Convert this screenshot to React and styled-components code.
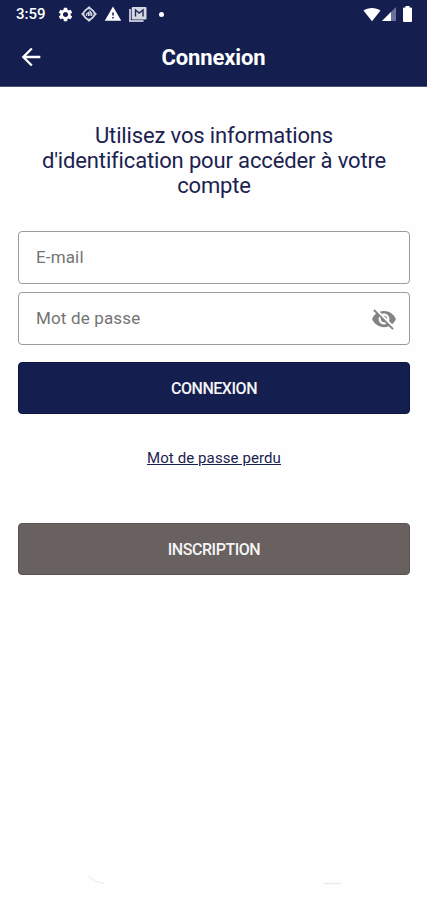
// IMPORT PACKAGES
import styled, { createGlobalStyle } from 'styled-components';
import { MdArrowBack, MdSettings, MdVisibilityOff, MdWarning } from 'react-icons/md';

// STYLES
const GlobalStyle = createGlobalStyle`
  *, *::before, *::after {
    box-sizing: border-box;
  }
  body {
    margin: 0;
    background-color: #fefefe;
    font-family: Roboto, sans-serif;
  }
`;

const Screen = styled.div`
  width: 427px;
  height: 900px;
  display: flex;
  flex-direction: column;
  overflow: hidden;
`;

const Header = styled.header`
  flex: none;
  height: 87px;
  background-color: #141f50;
  color: #fff;
  border-bottom: 1px solid #4c5477;
`;

const StatusBar = styled.div`
  height: 28px;
  padding: 0 15px 0 16px;
  display: flex;
  align-items: center;
  justify-content: space-between;
`;

const StatusGroup = styled.div`
  display: flex;
  align-items: center;
  gap: ${(props) => props.$gap};
  svg {
    display: block;
  }
`;

const Clock = styled.span`
  width: 34px;
  font-size: 15px;
  font-weight: 500;
  line-height: 18px;
`;

const Dot = styled.span`
  width: 5px;
  height: 5px;
  margin-left: 5px;
  border-radius: 50%;
  background-color: #fff;
`;

const Toolbar = styled.div`
  height: 58px;
  padding: 0 17px;
  display: grid;
  grid-template-columns: 28px 1fr 28px;
  align-items: center;
`;

const IconButton = styled.button`
  padding: 0;
  border: none;
  background: none;
  color: ${(props) => props.$color};
  cursor: pointer;
  svg {
    display: block;
  }
`;

const Title = styled.h1`
  margin: 0;
  padding-top: 2px;
  font-size: 22px;
  font-weight: 700;
  line-height: 26px;
  letter-spacing: -0.1px;
  text-align: center;
`;

const Main = styled.main`
  flex: 1;
  padding: 36px 17px 0 18px;
  display: flex;
  flex-direction: column;
`;

const Intro = styled.p`
  margin: 0 0 33px;
  font-size: 22px;
  line-height: 25px;
  letter-spacing: -0.15px;
  text-align: center;
  color: #1b2250;
`;

const Form = styled.form`
  display: flex;
  flex-direction: column;
`;

const Field = styled.label`
  height: 53px;
  margin-bottom: 8px;
  padding: 0 12px 0 17px;
  display: flex;
  align-items: center;
  border: 1px solid #9b9b9b;
  border-radius: 4px;
`;

const Input = styled.input`
  flex: 1;
  min-width: 0;
  padding: 0 0 2px;
  border: none;
  outline: none;
  background: none;
  font-family: inherit;
  font-size: 17px;
  letter-spacing: 0.15px;
  color: #1b2250;
  &::placeholder {
    color: #747474;
    opacity: 1;
  }
`;

const Button = styled.button`
  width: 100%;
  height: 52px;
  padding: 0;
  border: 1px solid ${(props) => props.$border};
  border-radius: 4px;
  background-color: ${(props) => props.$color};
  font-family: inherit;
  font-size: 16px;
  font-weight: 500;
  letter-spacing: -0.45px;
  color: #f4f4f6;
  cursor: pointer;
`;

const SubmitRow = styled.div`
  padding-top: 9px;
`;

const LostLink = styled.a`
  align-self: center;
  margin: 35px 0 56px;
  font-size: 15px;
  line-height: 18px;
  letter-spacing: 0.1px;
  color: #1b2250;
  text-decoration: underline;
`;

const Footer = styled.footer`
  height: 24px;
  margin: 0 -17px 0 -18px;
  svg {
    display: block;
  }
`;

const Spacer = styled.div`
  flex: ${(props) => (props.$width ? 'none' : 1)};
  width: ${(props) => props.$width};
`;

// ICONS
const SyncIcon = () => (
  <svg width='16' height='16' viewBox='0 0 16 16' fill='none' stroke='#d8dbe6'>
    <path d='M8 1 15 8 8 15 1 8Z' strokeWidth='1.4' strokeLinejoin='round' />
    <circle cx='8' cy='8' r='5.300' strokeWidth='1.3' />
    <path d='M5.500 10V8L7.500 6.500V10M9 10V5.500L10.700 7.500V10' strokeWidth='1.2' />
  </svg>
);

const MailIcon = () => (
  <svg width='18' height='16' viewBox='0 0 18 16'>
    <path d='M1 3V15H14.500' fill='none' stroke='#b9bdce' strokeWidth='2' />
    <rect x='2.700' y='1' width='14.800' height='12.500' rx='1' fill='#d5d8e2' />
    <path d='M6.500 10.500V4L10.200 7 14 4V10.500' fill='none' stroke='#1f2955' strokeWidth='1.4' />
  </svg>
);

const WifiIcon = () => (
  <svg width='18' height='15' viewBox='0 0 19 15'>
    <path d='M.5 3.400C5.500-.4 13.500-.4 18.500 3.400L9.500 14.500Z' fill='#fff' />
  </svg>
);

const SignalIcon = () => (
  <svg width='14' height='14' viewBox='0 0 14 14'>
    <path d='M14 0V14H0Z' fill='#68719a' />
    <path d='M9 5V14H0Z' fill='#fff' />
  </svg>
);

const BatteryIcon = () => (
  <svg width='9' height='16' viewBox='0 0 9 16'>
    <path
      d='M2.500 0H6.500V1.500H8A1 1 0 0 1 9 2.500V15A1 1 0 0 1 8 16H1A1 1 0 0 1 0 15V2.500A1 1 0 0 1 1 1.500H2.500Z'
      fill='#fff'
    />
  </svg>
);

// APP COMPONENT
function App() {
  return (
    <Screen>
      <GlobalStyle />
      <Header>
        <StatusBar>
          <StatusGroup $gap='7px'>
            <Clock>3:59</Clock>
            <MdSettings size={17} />
            <SyncIcon />
            <MdWarning size={18} />
            <MailIcon />
            <Dot />
          </StatusGroup>
          <StatusGroup $gap='1px'>
            <WifiIcon />
            <SignalIcon />
            <Spacer $width='5px' />
            <BatteryIcon />
          </StatusGroup>
        </StatusBar>
        <Toolbar>
          <IconButton type='button' aria-label='Retour' $color='#fff'>
            <MdArrowBack size={28} />
          </IconButton>
          <Title>Connexion</Title>
        </Toolbar>
      </Header>
      <Main>
        <Intro>
          Utilisez vos informations
          <br />
          d'identification pour accéder à votre
          <br />
          compte
        </Intro>
        <Form onSubmit={(event) => event.preventDefault()}>
          <Field>
            <Input type='email' placeholder='E-mail' />
          </Field>
          <Field>
            <Input type='password' placeholder='Mot de passe' />
            <IconButton type='button' aria-label='Afficher' $color='#838383'>
              <MdVisibilityOff size={26} />
            </IconButton>
          </Field>
          <SubmitRow>
            <Button type='submit' $color='#141f50' $border='#0c1440'>
              CONNEXION
            </Button>
          </SubmitRow>
        </Form>
        <LostLink href='#'>Mot de passe perdu</LostLink>
        <Button type='button' $color='#68615f' $border='#59514f'>
          INSCRIPTION
        </Button>
        <Spacer />
        <Footer>
          <svg width='427' height='24' viewBox='0 0 427 24' fill='none' stroke='#ececec'>
            <path d='M88 .5Q95 6 104 7.500' />
            <path d='M324 7.500H341' strokeWidth='1.500' />
          </svg>
        </Footer>
      </Main>
    </Screen>
  );
}

export default App;
